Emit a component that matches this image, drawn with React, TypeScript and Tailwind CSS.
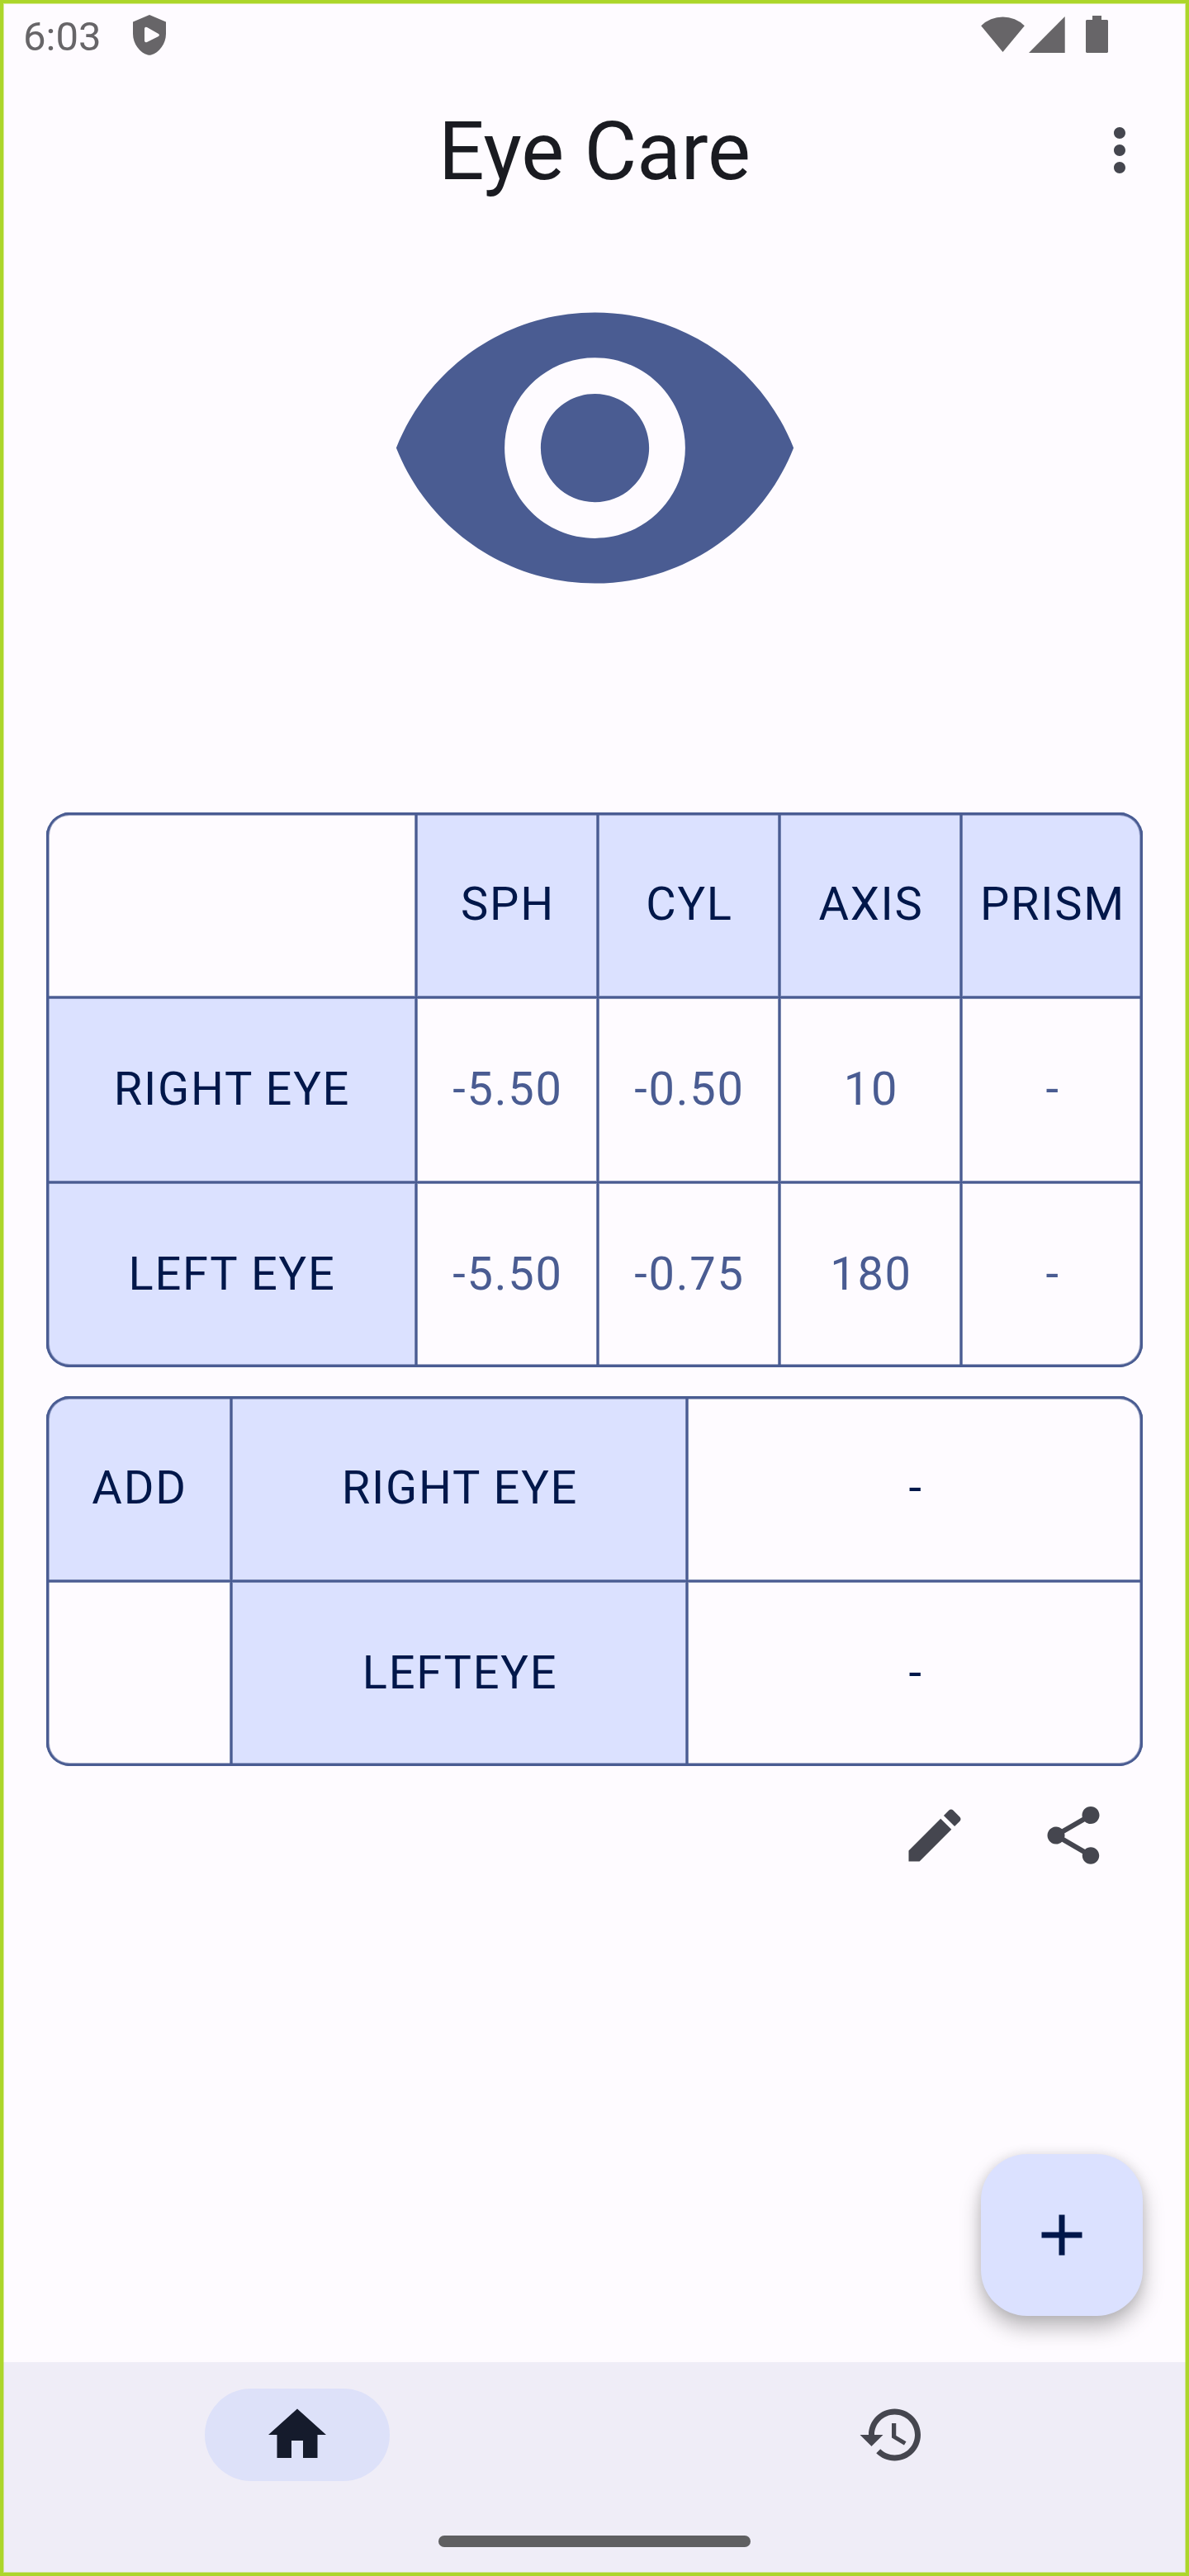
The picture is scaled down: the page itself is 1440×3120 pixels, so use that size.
import { ReactNode } from "react";
import { clsx } from "clsx";

type IconProps = { d: string; className: string };

function Icon({ d, className }: IconProps) {
  return (
    <svg viewBox="0 0 24 24" fill="currentColor" className={clsx("block shrink-0", className)} aria-hidden="true">
      <path d={d} />
    </svg>
  );
}

const paths = {
  eye: "M12 4.5C7 4.5 2.73 7.61 1 12c1.73 4.39 6 7.5 11 7.5s9.27-3.11 11-7.5c-1.73-4.39-6-7.5-11-7.5zM12 17c-2.76 0-5-2.24-5-5s2.24-5 5-5 5 2.24 5 5-2.24 5-5 5zm0-8c-1.66 0-3 1.34-3 3s1.34 3 3 3 3-1.34 3-3-1.34-3-3-3z",
  more: "M12 8c1.1 0 2-.9 2-2s-.9-2-2-2-2 .9-2 2 .9 2 2 2zm0 2c-1.1 0-2 .9-2 2s.9 2 2 2 2-.9 2-2-.9-2-2-2zm0 6c-1.1 0-2 .9-2 2s.9 2 2 2 2-.9 2-2-.9-2-2-2z",
  edit: "M3 17.25V21h3.75L17.81 9.94l-3.75-3.75L3 17.25zM20.71 7.04c.39-.39.39-1.02 0-1.41l-2.34-2.34c-.39-.39-1.02-.39-1.41 0l-1.83 1.83 3.75 3.75 1.83-1.83z",
  share:
    "M18 16.08c-.76 0-1.44.3-1.96.77L8.91 12.7c.05-.23.09-.46.09-.7s-.04-.47-.09-.7l7.05-4.11c.54.5 1.25.81 2.04.81 1.66 0 3-1.34 3-3s-1.34-3-3-3-3 1.34-3 3c0 .24.04.47.09.7L8.04 9.81C7.5 9.31 6.79 9 6 9c-1.66 0-3 1.34-3 3s1.34 3 3 3c.79 0 1.5-.31 2.04-.81l7.12 4.16c-.05.21-.08.43-.08.65 0 1.61 1.31 2.92 2.92 2.92s2.92-1.31 2.92-2.92-1.31-2.92-2.92-2.92z",
  add: "M19 13h-6v6h-2v-6H5v-2h6V5h2v6h6v2z",
  home: "M10 20v-6h4v6h5v-8h3L12 3 2 12h3v8z",
  history:
    "M13 3c-4.97 0-9 4.03-9 9H1l3.89 3.89.07.14L9 12H6c0-3.87 3.13-7 7-7s7 3.13 7 7-3.13 7-7 7c-1.93 0-3.68-.79-4.94-2.06l-1.42 1.42C8.27 19.99 10.51 21 13 21c4.97 0 9-4.03 9-9s-4.03-9-9-9zm-1 5v5l4.28 2.54.72-1.21-3.5-2.08V8H12z",
};

function StatusBar() {
  return (
    <div className="flex h-[84px] items-start pl-[28px] pr-[98px] text-[#676568]">
      <span className="mt-[16px] text-[49px] leading-[57px]">6:03</span>
      <svg viewBox="0 0 40 49" fill="currentColor" fillRule="evenodd" className="ml-[39px] mt-[18px] h-[49px] w-[40px]">
        <path d="M20 0 40 8.6V23C40 35 31.5 46 22 48.5Q20 49.2 18 48.5C8.5 46 0 35 0 23V8.6ZM14 16.5V31.5Q14.4 34 17 32.9L31 26Q32.8 24.6 31 23L17 15.1Q14.4 14 14 16.5Z" />
      </svg>
      <div className="ml-auto flex">
        <svg viewBox="0 0 53 44" fill="currentColor" className="mt-[19px] h-[44px] w-[53px]">
          <path d="M26.5 44 0.2 12.3A36 34 0 0 1 52.8 12.3Z" />
        </svg>
        <svg viewBox="0 0 44 44" fill="currentColor" className="ml-[5px] mt-[19.5px] h-[44px] w-[44px]">
          <path d="M0 44 43.7 0V44Z" />
        </svg>
        <svg viewBox="0 0 27 45" fill="currentColor" className="ml-[25px] mt-[19px] h-[45px] w-[27px]">
          <path d="M8 0h11v5h7l1 1v38l-1 1H1l-1-1V6l1-1h7z" />
        </svg>
      </div>
    </div>
  );
}

function Cell({ head, value, children }: { head?: boolean; value?: boolean; children?: ReactNode }) {
  return (
    <div
      className={clsx(
        "flex items-center justify-center whitespace-nowrap pb-[2px] pl-[2px] shadow-[inset_0_0_0_1px_#4a5c92,inset_0_0_0_2px_rgba(74,92,146,0.7)]",
        head ? "bg-[#dbe1ff]" : "bg-[#fefbff]",
        value ? "text-[#4a5c92]" : "text-[#00174a]",
      )}
    >
      {children}
    </div>
  );
}

function Table({ className, children }: { className: string; children: ReactNode }) {
  return (
    <div className="relative overflow-hidden rounded-[28px] text-[56px] leading-[84px] tracking-[1.75px]">
      <div className={clsx("grid auto-rows-[224px]", className)}>{children}</div>
      <div className="pointer-events-none absolute inset-0 rounded-[28px] shadow-[inset_0_0_0_3px_#4a5c92,inset_0_0_0_4px_rgba(74,92,146,0.5)]" />
    </div>
  );
}

const measurements = [
  { eye: "RIGHT EYE", values: ["-5.50", "-0.50", "10", "-"] },
  { eye: "LEFT EYE", values: ["-5.50", "-0.75", "180", "-"] },
];

function PrescriptionTable() {
  return (
    <Table className="grid-cols-[448px_repeat(4,220px)]">
      <Cell />
      {["SPH", "CYL", "AXIS", "PRISM"].map((label) => (
        <Cell key={label} head>
          {label}
        </Cell>
      ))}
      {measurements.map((row) => [
        <Cell key={row.eye} head>
          {row.eye}
        </Cell>,
        ...row.values.map((v, i) => (
          <Cell key={row.eye + i} value>
            {v}
          </Cell>
        )),
      ])}
    </Table>
  );
}

function AdditionTable() {
  return (
    <Table className="grid-cols-[224px_552px_552px]">
      <Cell head>ADD</Cell>
      <Cell head>RIGHT EYE</Cell>
      <Cell>-</Cell>
      <Cell />
      <Cell head>LEFTEYE</Cell>
      <Cell>-</Cell>
    </Table>
  );
}

function NavBar() {
  return (
    <nav className="h-[259px] bg-[#efedf7]">
      <div className="grid grid-cols-2 justify-items-center pt-[32px]">
        <button className="flex h-[112px] w-[224px] items-center justify-center rounded-full bg-[#dde1f9] text-[#151b2c]">
          <Icon d={paths.home} className="size-[84px]" />
        </button>
        <button className="flex h-[112px] w-[224px] items-center justify-center text-[#45464f]">
          <Icon d={paths.history} className="size-[84px]" />
        </button>
      </div>
      <div className="mx-auto mt-[66px] h-[14px] w-[378px] rounded-full bg-[#5f5f61]" />
    </nav>
  );
}

export default function App() {
  return (
    <div className="relative flex h-[3120px] w-[1440px] flex-col overflow-hidden bg-[#fefbff] font-['Roboto',sans-serif]">
      <StatusBar />
      <header className="grid h-[196px] grid-cols-[168px_1fr_168px] items-center">
        <h1 className="col-start-2 pt-[3px] text-center text-[98px] leading-[126px] text-[#1a1b21]">Eye Care</h1>
        <button className="ml-[42px] text-[#45464f]">
          <Icon d={paths.more} className="size-[84px]" />
        </button>
      </header>
      <main className="flex flex-1 flex-col px-[56px]">
        <Icon d={paths.eye} className="mx-auto mb-[179px] size-[525px] text-[#4a5c92]" />
        <div className="flex flex-col gap-[35px]">
          <PrescriptionTable />
          <AdditionTable />
        </div>
        <div className="flex justify-end text-[#45464f]">
          <button className="flex size-[168px] items-center justify-center">
            <Icon d={paths.edit} className="size-[84px]" />
          </button>
          <button className="flex size-[168px] items-center justify-center">
            <Icon d={paths.share} className="size-[84px]" />
          </button>
        </div>
        <button className="mb-[56px] ml-auto mt-auto flex size-[196px] items-center justify-center rounded-[56px] bg-[#dbe1ff] text-[#00174a] shadow-[0_14px_26px_rgba(0,0,0,0.27),0_0_14px_rgba(0,0,0,0.09)]">
          <Icon d={paths.add} className="size-[84px]" />
        </button>
      </main>
      <NavBar />
      <div className="pointer-events-none absolute inset-0 shadow-[inset_0_0_0_4px_#acd62b,inset_0_0_0_5px_rgba(172,214,43,0.45)]" />
    </div>
  );
}
